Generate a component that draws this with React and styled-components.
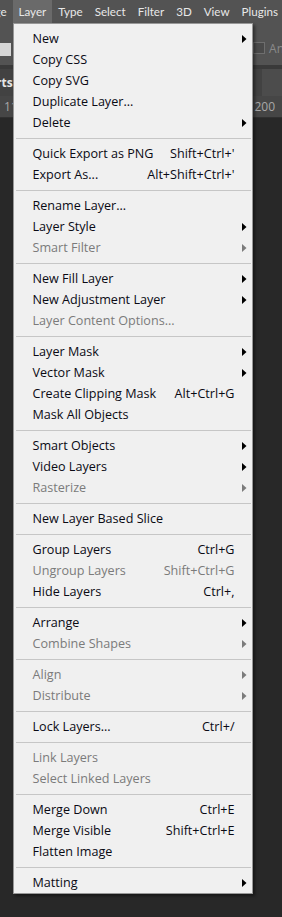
import React from "react";
import styled, { createGlobalStyle } from "styled-components";

const Global = createGlobalStyle`
  html, body { margin: 0; padding: 0; background: #282828; }
  body { font-family: "Open Sans", "Noto Sans", sans-serif; overflow: hidden; }
  * { box-sizing: border-box; }
`;

const Shell = styled.div`
  width: 282px;
  height: 917px;
  display: flex;
  flex-direction: column;
  background: #282828;
  overflow: hidden;
  position: relative;
`;

const MenuBar = styled.div`
  height: 23px;
  flex: none;
  display: flex;
  align-items: stretch;
  background: #535353;
  margin-left: -30px;
  position: relative;
  z-index: 2;
`;

const BarItem = styled.div`
  position: relative;
  display: flex;
  align-items: center;
  padding: 0 6px;
  font-family: Lato, "Open Sans", sans-serif;
  font-size: 11.6px;
  color: #e8e8e8;
  white-space: nowrap;
  background: ${(p) => (p.$active ? "#6a6a6a" : "transparent")};
`;

const OptionsBar = styled.div`
  height: 42px;
  flex: none;
  display: flex;
  align-items: center;
  justify-content: space-between;
  background: #535353;
`;

const LightSquare = styled.div`
  width: 11px;
  height: 13px;
  background: #d6d6d6;
  margin-top: 10px;
`;

const RightOpts = styled.div`
  display: flex;
  align-items: center;
  gap: 4px;
  margin-right: -2px;
  margin-top: 8px;
`;

const CheckBox = styled.div`
  width: 12px;
  height: 12px;
  border: 1px solid #6e6e6e;
  background: #4a4a4a;
`;

const FadedLabel = styled.span`
  font-size: 12px;
  color: #8a8a8a;
`;

const Divider = styled.div`
  height: 4px;
  flex: none;
  background: #3a3a3a;
`;

const TabBar = styled.div`
  height: 27px;
  flex: none;
  display: flex;
  align-items: center;
  justify-content: space-between;
  background: #424242;
`;

const TabLabel = styled.span`
  font-size: 12px;
  font-weight: 700;
  color: #e6e6e6;
  margin-left: -4px;
`;

const TabBlock = styled.div`
  width: 20px;
  height: 27px;
  background: #4c4c4c;
`;

const Ruler = styled.div`
  height: 22px;
  flex: none;
  display: flex;
  align-items: center;
  justify-content: space-between;
  background: #464646;
  border-bottom: 1px solid #303030;
  font-size: 12px;
  color: #a8a8a8;
  padding: 0 7px 0 4px;
`;

const Workspace = styled.div`
  flex: 1;
  background: #282828;
`;

const Dropdown = styled.div`
  position: absolute;
  top: 100%;
  left: 0;
  width: 240px;
  background: #f0f0f0;
  border: 1px solid #979797;
  padding: 4px 0 0 0;
  box-shadow: 2px 2px 3px rgba(0, 0, 0, 0.45);
  z-index: 10;
  font-family: "Open Sans", "Noto Sans", sans-serif;
`;

const Row = styled.div`
  height: 21px;
  display: flex;
  align-items: center;
  padding: 0 5px 0 19px;
  font-size: 12.6px;
  color: ${(p) => (p.$disabled ? "#7b7b7b" : "#0a0a14")};
  white-space: nowrap;
`;

const Label = styled.span`
  flex: 1;
`;

const Shortcut = styled.span`
  margin-right: 7px;
`;

const ArrowSlot = styled.span`
  width: 5px;
  display: flex;
  align-items: center;
  justify-content: flex-start;
`;

const Separator = styled.div`
  height: 10px;
  display: flex;
  align-items: center;
  padding: 0 1px 0 2px;
  &::before {
    content: "";
    flex: 1;
    height: 1px;
    background: #c6c6c6;
  }
`;

const Arrow = ({ disabled }) => (
  <svg width="5" height="8" viewBox="0 0 5 8">
    <polygon points="0,0 4.5,4 0,8" fill={disabled ? "#7b7b7b" : "#000"} />
  </svg>
);

const menu = [
  ["New", null, true],
  ["Copy CSS"],
  ["Copy SVG"],
  ["Duplicate Layer..."],
  ["Delete", null, true],
  "-",
  ["Quick Export as PNG", "Shift+Ctrl+'"],
  ["Export As...", "Alt+Shift+Ctrl+'"],
  "-",
  ["Rename Layer..."],
  ["Layer Style", null, true],
  ["Smart Filter", null, true, true],
  "-",
  ["New Fill Layer", null, true],
  ["New Adjustment Layer", null, true],
  ["Layer Content Options...", null, false, true],
  "-",
  ["Layer Mask", null, true],
  ["Vector Mask", null, true],
  ["Create Clipping Mask", "Alt+Ctrl+G"],
  ["Mask All Objects"],
  "-",
  ["Smart Objects", null, true],
  ["Video Layers", null, true],
  ["Rasterize", null, true, true],
  "-",
  ["New Layer Based Slice"],
  "-",
  ["Group Layers", "Ctrl+G"],
  ["Ungroup Layers", "Shift+Ctrl+G", false, true],
  ["Hide Layers", "Ctrl+,"],
  "-",
  ["Arrange", null, true],
  ["Combine Shapes", null, true, true],
  "-",
  ["Align", null, true, true],
  ["Distribute", null, true, true],
  "-",
  ["Lock Layers...", "Ctrl+/"],
  "-",
  ["Link Layers", null, false, true],
  ["Select Linked Layers", null, false, true],
  "-",
  ["Merge Down", "Ctrl+E"],
  ["Merge Visible", "Shift+Ctrl+E"],
  ["Flatten Image"],
  "-",
  ["Matting", null, true],
];

const barItems = ["Image", "Layer", "Type", "Select", "Filter", "3D", "View", "Plugins", "Window"];

export default function App() {
  return (
    <>
      <Global />
      <Shell>
        <MenuBar>
          {barItems.map((name) => (
            <BarItem key={name} $active={name === "Layer"}>
              {name}
              {name === "Layer" && (
                <Dropdown>
                  {menu.map((item, i) =>
                    item === "-" ? (
                      <Separator key={i} />
                    ) : (
                      <Row key={i} $disabled={item[3]}>
                        <Label>{item[0]}</Label>
                        {item[1] && <Shortcut>{item[1]}</Shortcut>}
                        <ArrowSlot>{item[2] && <Arrow disabled={item[3]} />}</ArrowSlot>
                      </Row>
                    )
                  )}
                </Dropdown>
              )}
            </BarItem>
          ))}
        </MenuBar>
        <OptionsBar>
          <LightSquare />
          <RightOpts>
            <CheckBox />
            <FadedLabel>An</FadedLabel>
          </RightOpts>
        </OptionsBar>
        <Divider />
        <TabBar>
          <TabLabel>rts</TabLabel>
          <TabBlock />
        </TabBar>
        <Ruler>
          <span>11</span>
          <span>200</span>
        </Ruler>
        <Workspace />
      </Shell>
    </>
  );
}
